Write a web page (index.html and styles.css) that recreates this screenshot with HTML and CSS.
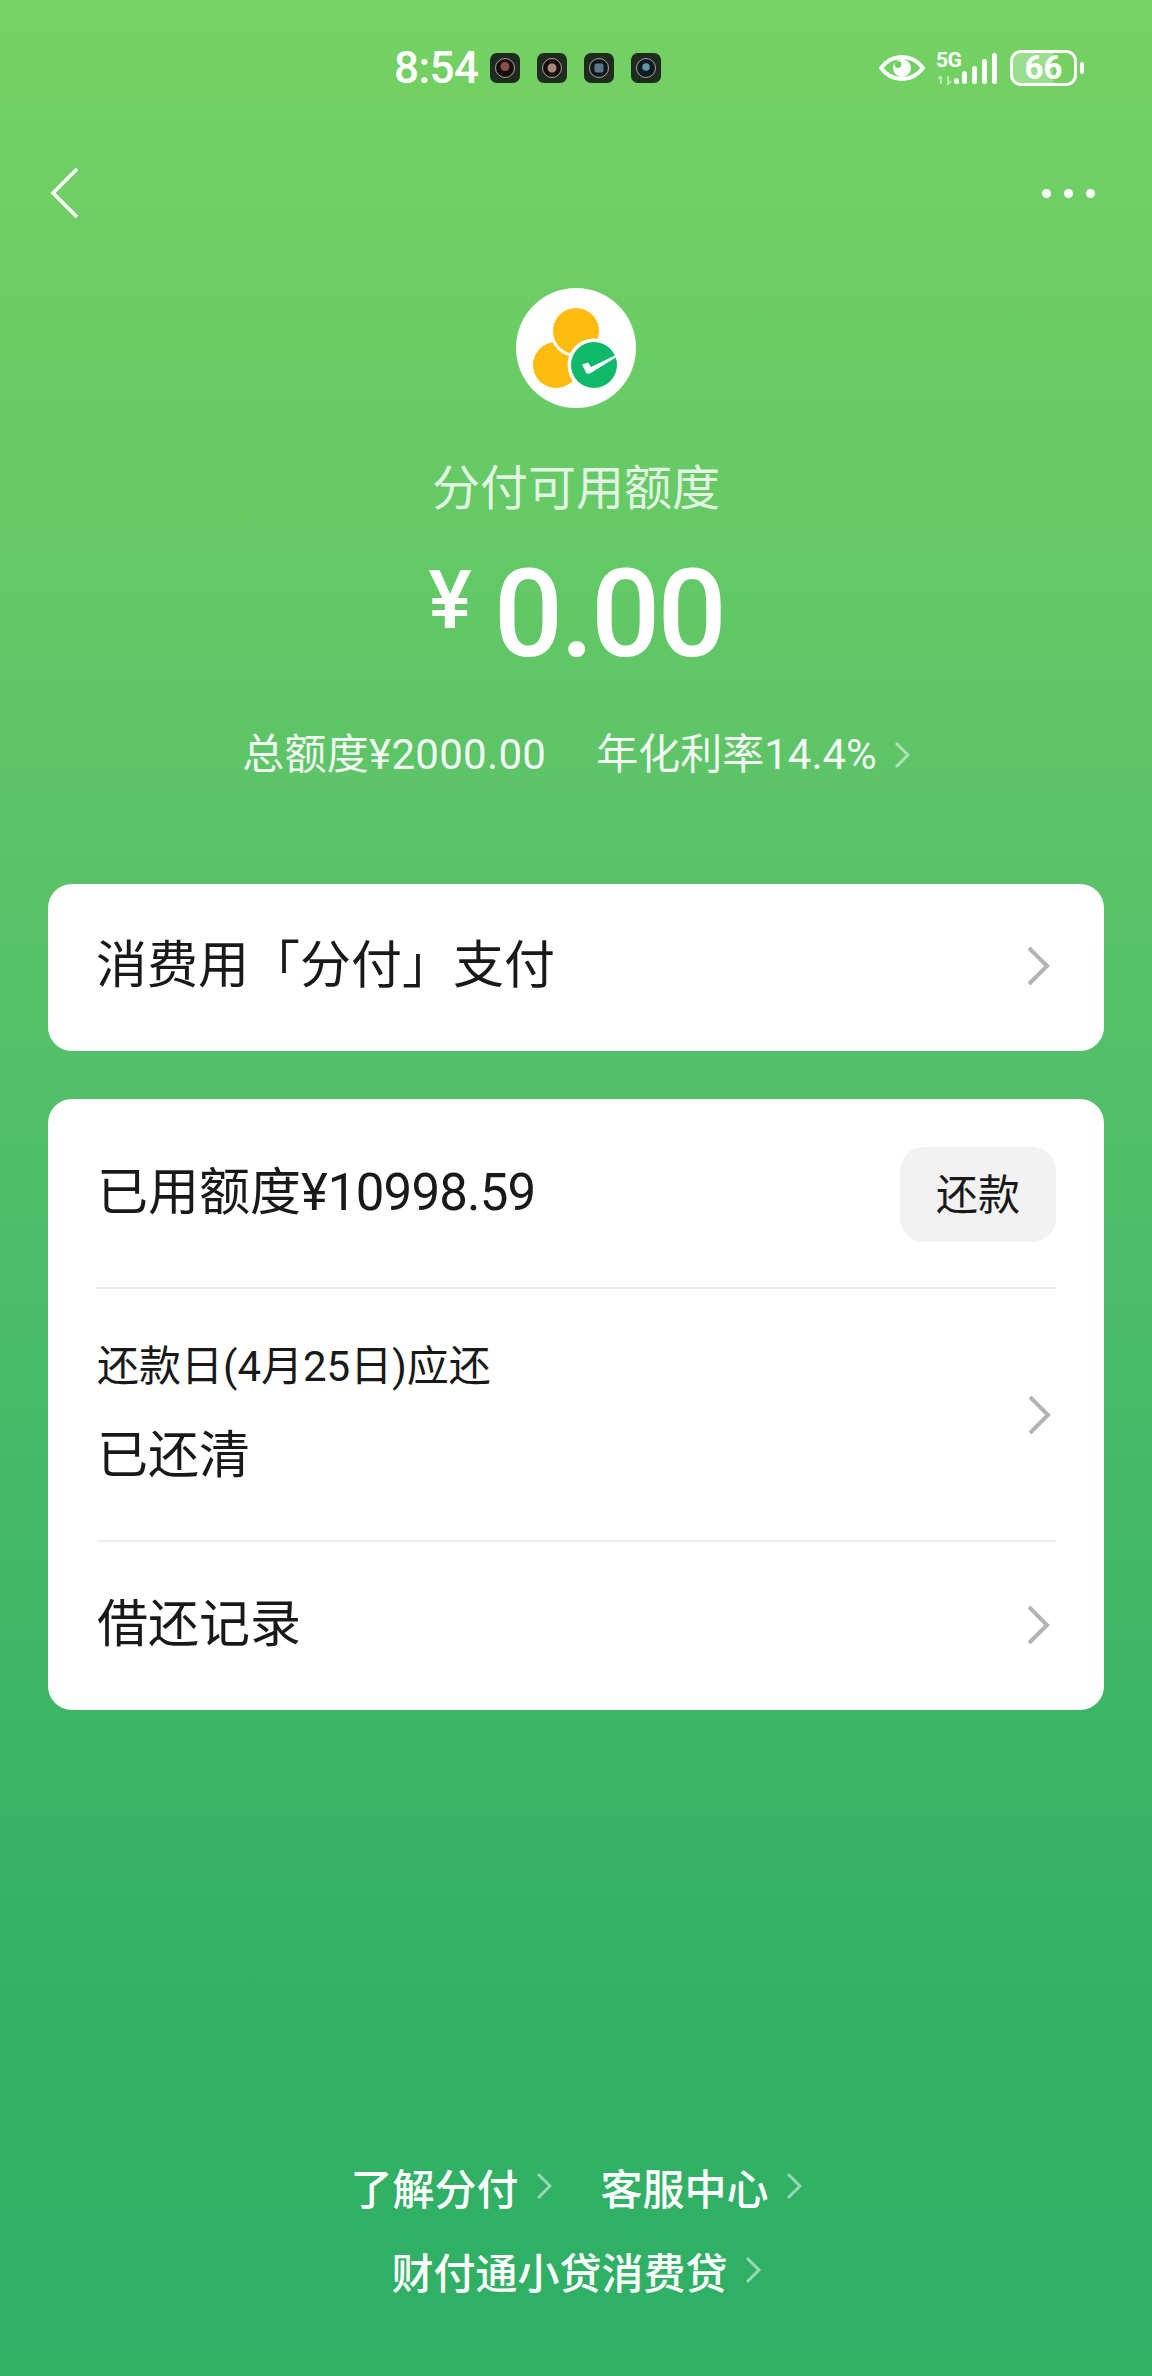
FILE: index.html
```html
<!DOCTYPE html>
<html lang="zh-CN">
<head>
    <meta charset="UTF-8">
    <meta name="viewport" content="width=device-width, initial-scale=1.0">
    <title>分付</title>
    <link rel="stylesheet" href="styles.css">
</head>
<body>
<div class="page">
    <div class="status">
        <span class="time">8:54</span>
        <div class="apps">
            <svg class="app" viewBox="0 0 30 30"><rect width="30" height="30" rx="7" fill="#1e2b1e"/><circle cx="15" cy="15" r="9.500" fill="#160f0e" stroke="#c8c8c0" stroke-width=".8"/><circle cx="15" cy="13.500" r="4.500" fill="#8a5048"/></svg>
            <svg class="app" viewBox="0 0 30 30"><rect width="30" height="30" rx="7" fill="#1e2b1e"/><circle cx="15" cy="15" r="9.500" fill="#160f0e" stroke="#c8c8c0" stroke-width=".8"/><circle cx="15" cy="15" r="4.500" fill="#a8867e"/></svg>
            <svg class="app" viewBox="0 0 30 30"><rect width="30" height="30" rx="7" fill="#1e2b1e"/><circle cx="15" cy="15" r="9.500" fill="#10181c" stroke="#c8c8c0" stroke-width=".8"/><rect x="10.500" y="10.500" width="9" height="9" rx="2" fill="#58788c"/></svg>
            <svg class="app" viewBox="0 0 30 30"><rect width="30" height="30" rx="7" fill="#1e2b1e"/><circle cx="15" cy="15" r="9.500" fill="#0e1c22" stroke="#c8c8c0" stroke-width=".8"/><circle cx="15" cy="14" r="3.800" fill="#5f98aa"/></svg>
        </div>
        <div class="sys">
            <svg class="eye" viewBox="0 0 46 26"><path d="M2 13C8 5 15 2 23 2s15 3 21 11c-6 8-13 11-21 11S8 21 2 13z" fill="none" stroke="#fff" stroke-width="3.800"/><circle cx="23" cy="13" r="9" fill="#fff"/><circle cx="19" cy="9.500" r="3.400" fill="#70cf63"/></svg>
            <div class="net">
                <span class="net-label">5G</span>
                <svg class="net-bars" viewBox="0 0 62 34"><g fill="#fff"><rect x="18" y="27" width="5" height="6" rx="2.500"/><rect x="26" y="20" width="5" height="13" rx="2.500"/><rect x="36" y="15" width="5" height="18" rx="2.500"/><rect x="46" y="8" width="5" height="25" rx="2.500"/><rect x="56" y="2" width="5" height="31" rx="2.500"/></g><path d="M5 33v-8M2.500 28 5 25M12 25v8l3-3" fill="none" stroke="#fff" stroke-width="2" opacity=".5"/></svg>
            </div>
            <div class="battery"><span class="battery-num">66</span></div>
            <span class="battery-nub"></span>
        </div>
    </div>

    <div class="nav">
        <svg class="back" viewBox="0 0 30 52"><path d="M27 2 3 26l24 24" fill="none" stroke="#fff" stroke-width="3.600"/></svg>
        <div class="more"><i></i><i></i><i></i></div>
    </div>

    <svg class="logo" viewBox="0 0 120 120">
        <circle cx="60" cy="60" r="60" fill="#fff"/>
        <circle cx="40" cy="77" r="23" fill="#fdbb10"/>
        <circle cx="60" cy="43" r="26" fill="#fff"/>
        <circle cx="60" cy="43" r="23" fill="#fdbb10"/>
        <circle cx="78" cy="77" r="26.500" fill="#fff"/>
        <circle cx="78" cy="77" r="23" fill="#10b96a"/>
        <path d="M66 76.500 72 74.500 75 79 100 67 100.500 69 74 85.500 70.500 85.500z" fill="#fff"/>
    </svg>

    <div class="title">分付可用额度</div>
    <div class="amount"><span class="yen">¥</span><span class="num">0.00</span></div>
    <div class="sub">
        <span class="limit">总额度¥2000.00</span>
        <span class="rate">年化利率14.4%</span>
        <svg class="arrow" viewBox="0 0 16 28"><path d="M2 2l12 12L2 26" /></svg>
    </div>

    <div class="card card-pay">
        <span class="big">消费用「分付」支付</span>
        <svg class="go" viewBox="0 0 24 40"><path d="M3 2l18 18L3 38"/></svg>
    </div>

    <div class="card card-info">
        <div class="row row-used">
            <span class="big">已用额度¥<span class="digits">10998.59</span></span>
            <span class="btn">还款</span>
        </div>
        <div class="row row-due">
            <div class="due-text">
                <div class="label">还款日(4月25日)应还</div>
                <div class="big">已还清</div>
            </div>
            <svg class="go" viewBox="0 0 24 40"><path d="M3 2l18 18L3 38"/></svg>
        </div>
        <div class="row row-log">
            <span class="big">借还记录</span>
            <svg class="go" viewBox="0 0 24 40"><path d="M3 2l18 18L3 38"/></svg>
        </div>
    </div>

    <div class="foot">
        <div class="foot-line">
            <span>了解分付</span>
            <svg class="arrow" viewBox="0 0 16 28"><path d="M2 2l12 12L2 26"/></svg>
            <span class="foot-next">客服中心</span>
            <svg class="arrow" viewBox="0 0 16 28"><path d="M2 2l12 12L2 26"/></svg>
        </div>
        <div class="foot-line">
            <span>财付通小贷消费贷</span>
            <svg class="arrow" viewBox="0 0 16 28"><path d="M2 2l12 12L2 26"/></svg>
        </div>
    </div>
</div>
</body>
</html>
```

FILE: styles.css
```css
html, body {
    margin: 0;
    padding: 0;
}

body {
    font-family: "Roboto", "Noto Sans CJK SC", sans-serif;
    color: #fff;
}

.page {
    width: 1152px;
    height: 2376px;
    overflow: hidden;
    display: flex;
    flex-direction: column;
    background: linear-gradient(180deg, #75d263 0%, #53bf69 46%, #32b066 85%, #2fb065 100%);
}

/* status bar */
.status {
    height: 136px;
    flex: none;
    display: flex;
    align-items: center;
    padding: 0 68px 0 394px;
    box-sizing: border-box;
}

.time {
    font-size: 44px;
    font-weight: 500;
    letter-spacing: -0.5px;
    width: 96px;
}

.apps {
    display: flex;
    gap: 17px;
}

.app {
    width: 30px;
    height: 30px;
}

.sys {
    margin-left: auto;
    display: flex;
    align-items: center;
}

.eye {
    width: 46px;
    height: 26px;
}

.net {
    width: 62px;
    height: 34px;
    margin-left: 11px;
    position: relative;
}

.net-bars {
    width: 62px;
    height: 34px;
    display: block;
}

.net-label {
    position: absolute;
    left: 0;
    top: -2px;
    font-size: 21px;
    line-height: 22px;
    font-weight: 700;
    letter-spacing: -0.5px;
}

.battery {
    width: 67px;
    height: 36px;
    margin-left: 12px;
    box-sizing: border-box;
    border: 3px solid #fff;
    border-radius: 11px;
    display: flex;
    align-items: center;
    justify-content: center;
    background: linear-gradient(90deg, rgba(255, 255, 255, 0.28) 66%, transparent 66%);
}

.battery-num {
    font-size: 33px;
    line-height: 30px;
    font-weight: 700;
}

.battery-nub {
    width: 4px;
    height: 12px;
    margin-left: 3px;
    border-radius: 2px;
    background: #fff;
}

/* nav */
.nav {
    height: 114px;
    flex: none;
    display: flex;
    align-items: center;
    justify-content: space-between;
    padding: 0 57px 0 50px;
}

.back {
    width: 30px;
    height: 52px;
}

.more {
    display: flex;
    gap: 13px;
}

.more i {
    width: 9px;
    height: 9px;
    border-radius: 50%;
    background: #fff;
}

/* summary */
.logo {
    width: 120px;
    height: 120px;
    flex: none;
    margin: 38px auto 0;
}

.title {
    margin-top: 51px;
    text-align: center;
    font-size: 48px;
    line-height: 60px;
    color: rgba(255, 255, 255, 0.82);
}

.amount {
    margin-top: 26px;
    height: 140px;
    display: flex;
    justify-content: center;
    line-height: 140px;
    font-weight: 500;
}

.yen {
    font-size: 82px;
    line-height: 110px;
    margin-right: 22px;
}

.num {
    font-size: 122px;
    letter-spacing: -3px;
}

.sub {
    margin-top: 45px;
    height: 50px;
    display: flex;
    justify-content: center;
    align-items: center;
    font-size: 42px;
    line-height: 50px;
    color: rgba(255, 255, 255, 0.95);
}

.limit {
    letter-spacing: 0.3px;
}

.rate {
    margin-left: 50px;
}

.arrow {
    width: 16px;
    height: 28px;
    margin-left: 17px;
    fill: none;
    stroke: rgba(255, 255, 255, 0.5);
    stroke-width: 3;
}

/* cards */
.card {
    margin: 0 48px;
    background: #fff;
    border-radius: 24px;
    color: #191919;
}

.card-pay {
    margin-top: 104px;
    height: 167px;
    padding: 0 54px 3px 48px;
    box-sizing: border-box;
    display: flex;
    align-items: center;
    justify-content: space-between;
}

.card-info {
    margin-top: 48px;
    height: 611px;
    padding: 0 48px 0 49px;
    display: flex;
    flex-direction: column;
}

.big {
    font-size: 51px;
    line-height: 64px;
}

.digits {
    letter-spacing: -0.8px;
}

.go {
    width: 24px;
    height: 40px;
    fill: none;
    stroke: #b3b3b3;
    stroke-width: 4;
}

.row {
    display: flex;
    align-items: center;
    justify-content: space-between;
    border-bottom: 2px solid #ececec;
}

.row-used {
    height: 188px;
}

.row-due {
    height: 251px;
    padding-right: 5px;
}

.row-log {
    height: 168px;
    padding: 0 6px 2px 0;
    box-sizing: border-box;
    border-bottom: 0;
}

.btn {
    width: 156px;
    height: 95px;
    border-radius: 24px;
    background: #f2f2f2;
    display: flex;
    align-items: center;
    justify-content: center;
    box-sizing: border-box;
    padding-bottom: 5px;
    font-size: 42px;
    margin-top: 2px;
}

.label {
    font-size: 42px;
    line-height: 50px;
    margin-bottom: 32px;
}

/* footer links */
.foot {
    margin-top: 448px;
    display: flex;
    flex-direction: column;
    gap: 28px;
    align-items: center;
}

.foot-line {
    height: 56px;
    display: flex;
    align-items: center;
    font-size: 42px;
    font-weight: 500;
}

.foot-next {
    margin-left: 49px;
}
```
